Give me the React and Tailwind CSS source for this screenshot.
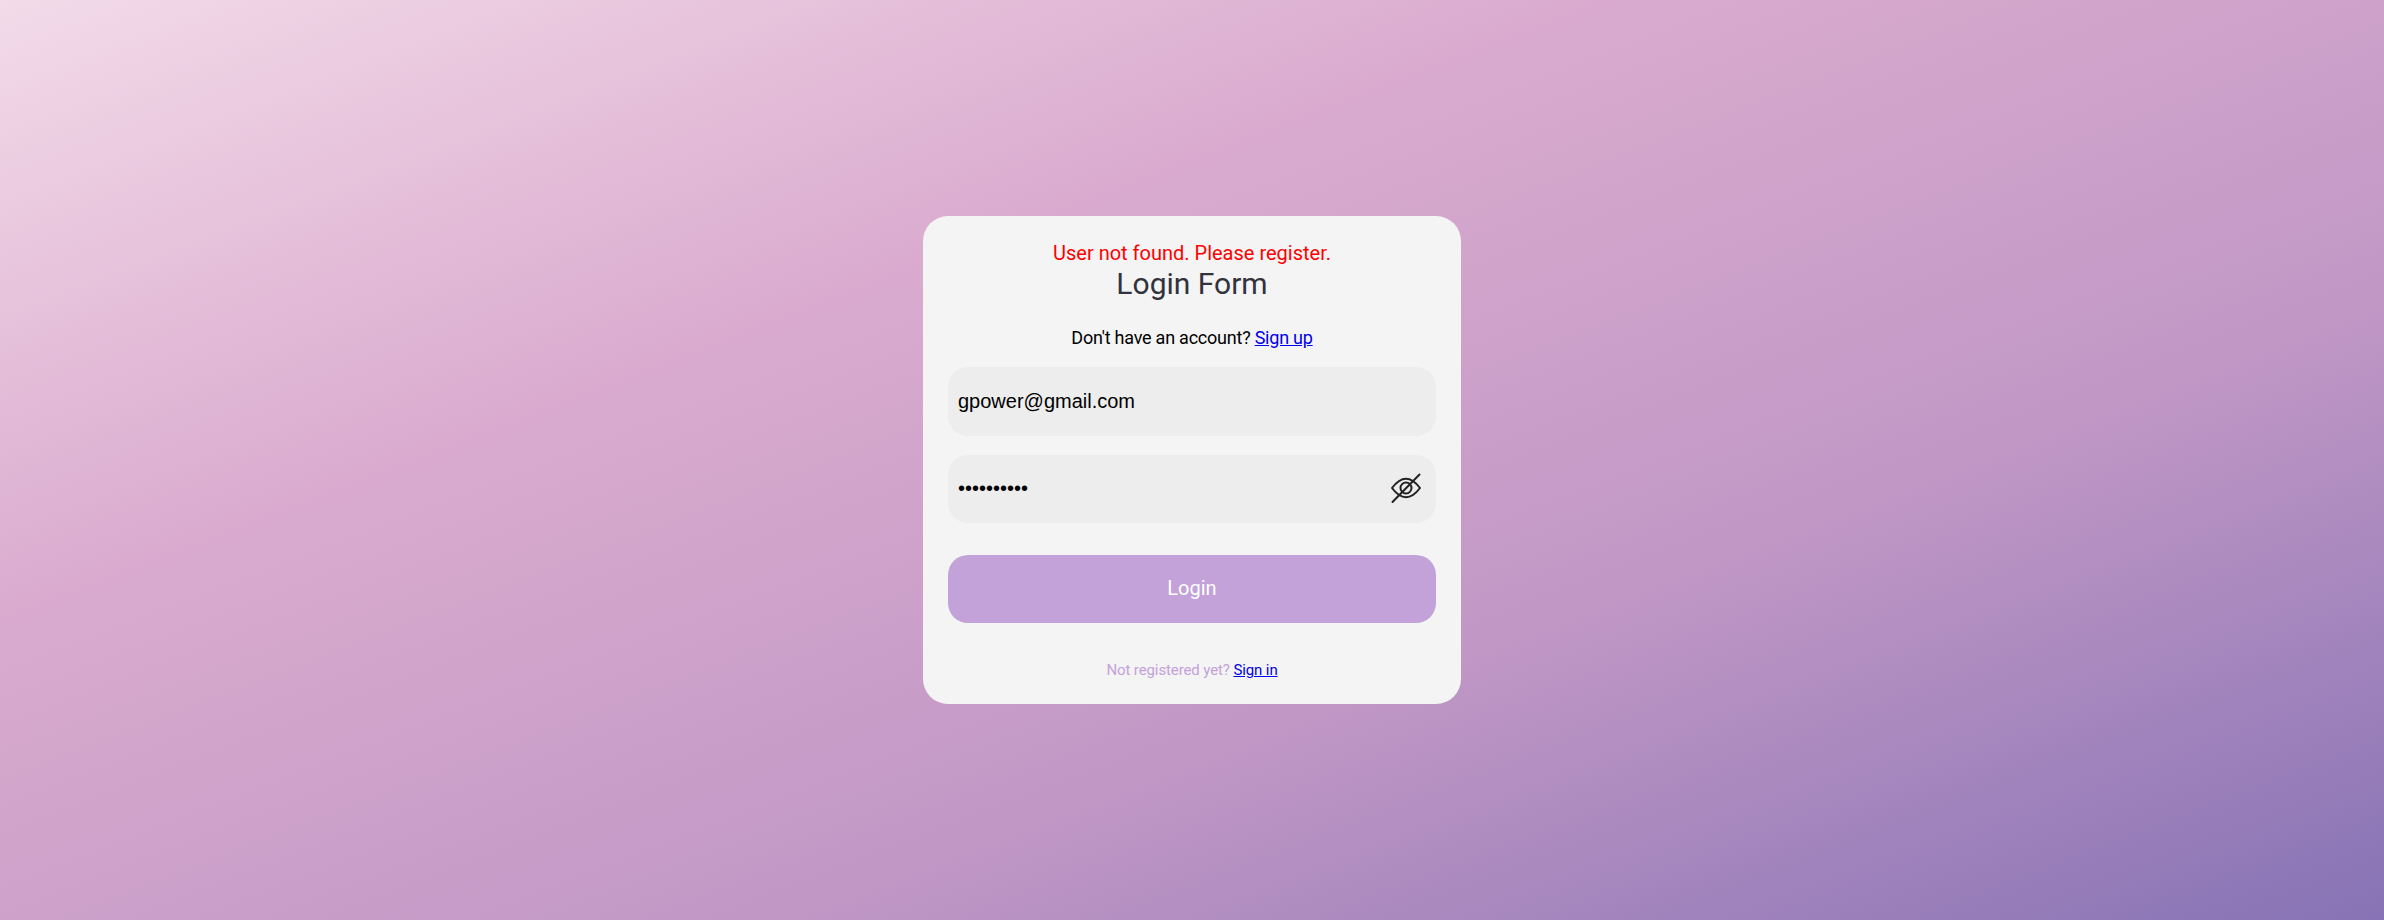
export default function App() {
  return (
    <main className="flex h-[920px] w-full items-center justify-center bg-[linear-gradient(to_bottom_right,#f3dbe9_0%,#daabcf_33.3%,#c097c5_66.6%,#8773b5_100%)] font-[Roboto,sans-serif] text-black">
      <section className="flex h-[488px] w-[538px] flex-col items-center rounded-[25px] bg-[#f4f4f4] p-[25px]">
        <p className="text-[20px] leading-[24px] text-[#ff0000]">User not found. Please register.</p>
        <h1 className="mt-px text-[30px] leading-[36px] text-[#32323c]">Login Form</h1>
        <p className="mt-[25px] text-[18px] leading-[21px] tracking-[-0.23px]">
          Don't have an account? <a href="#" className="text-[#0000ee] underline">Sign up</a>
        </p>
        <form className="mt-[19px] flex w-full flex-col">
          <input type="email" defaultValue="gpower@gmail.com" className="h-[69px] w-full rounded-[20px] bg-[#ededed] px-[10px] font-['Liberation_Sans',Arial,sans-serif] text-[20px] outline-none" />
          <div className="mt-[19px] flex h-[68px] w-full items-center rounded-[20px] bg-[#ededed] px-[10px] pb-[2px]">
            <input type="password" defaultValue="abcdefghij" className="min-w-0 flex-1 bg-transparent font-['Liberation_Sans',Arial,sans-serif] text-[20px] outline-none" />
            <svg viewBox="0 0 40 40" className="size-10 text-[#222222]" fill="none" stroke="currentColor" strokeWidth="2" strokeLinecap="round" strokeLinejoin="round">
              <path d="M6 20Q20 1.500 34 20Q20 38.500 6 20Z" />
              <circle cx="20" cy="20" r="5.500" />
              <path d="M6.500 34 33.500 6.500" />
            </svg>
          </div>
          <button type="button" className="mt-[32px] h-[68px] w-full rounded-[20px] bg-[#c3a2da] pb-[2px] text-[20px] text-white">Login</button>
        </form>
        <p className="mt-[38px] text-[15px] leading-[18px] tracking-[-0.11px] text-[#c3a2da]">
          Not registered yet? <a href="#" className="text-[#0000ee] underline">Sign in</a>
        </p>
      </section>
    </main>
  );
}
